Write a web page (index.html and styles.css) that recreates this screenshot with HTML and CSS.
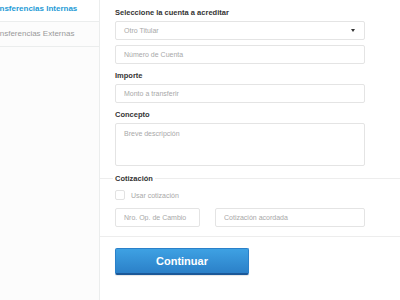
FILE: index.html
```html
<!DOCTYPE html>
<html lang="es">
<head>
    <meta charset="UTF-8">
    <title>Transferencias</title>
    <link rel="stylesheet" href="styles.css">
</head>
<body>
    <div class="layout">
        <nav class="sidebar">
            <a class="side-item active" href="#">Transferencias Internas</a>
            <a class="side-item" href="#">Transferencias Externas</a>
        </nav>

        <main class="main">
            <div class="section">
                <div class="label">Seleccione la cuenta a acreditar</div>
                <div class="select">
                    <span>Otro Titular</span>
                    <span class="caret"></span>
                </div>
                <input class="field gap-small" type="text" placeholder="Número de Cuenta">

                <div class="label spaced">Importe</div>
                <input class="field" type="text" placeholder="Monto a transferir">

                <div class="label spaced">Concepto</div>
                <textarea class="field area" placeholder="Breve descripción"></textarea>
            </div>

            <fieldset class="quote">
                <legend>Cotización</legend>
                <label class="check-row">
                    <span class="checkbox"></span>
                    <span>Usar cotización</span>
                </label>
                <div class="quote-row">
                    <input class="field op" type="text" placeholder="Nro. Op. de Cambio">
                    <input class="field rate" type="text" placeholder="Cotización acordada">
                </div>
            </fieldset>

            <div class="actions">
                <button class="btn-primary">Continuar</button>
            </div>
        </main>
    </div>
</body>
</html>
```

FILE: styles.css
```css
body {
    margin: 0;
    font-family: 'Liberation Sans', Arial, sans-serif;
    background-color: #ffffff;
    color: #333333;
}
.layout {
    display: flex;
    min-height: 300px;
}
.sidebar {
    width: 99px;
    flex-shrink: 0;
    border-right: 1px solid #ebeded;
    background-color: #fcfcfc;
    display: flex;
    flex-direction: column;
    overflow: hidden;
}
.side-item {
    display: block;
    height: 24px;
    line-height: 24px;
    font-size: 8px;
    color: #9a9a9a;
    text-decoration: none;
    white-space: nowrap;
    text-indent: -12px;
    border-bottom: 1px solid #ebeded;
}
.side-item.active {
    margin-top: -3px;
    color: #1f9bd6;
    font-weight: bold;
    text-indent: -12.5px;
    background-color: #ffffff;
    margin-right: -1px;
}
.main {
    flex: 1;
    display: flex;
    flex-direction: column;
}
.section {
    padding: 7px 15px 0;
    display: flex;
    flex-direction: column;
    width: 250px;
}
.label {
    height: 11px;
    line-height: 11px;
    font-size: 7.5px;
    font-weight: bold;
    color: #333333;
    margin-bottom: 3px;
}
.label.spaced {
    margin-top: 6px;
}
.select,
.field {
    box-sizing: border-box;
    height: 19px;
    border: 1px solid #e4e4e4;
    border-radius: 2px;
    background-color: #ffffff;
    font-family: 'Liberation Sans', Arial, sans-serif;
    font-size: 7px;
    color: #333333;
    padding: 0 8px;
    margin: 0;
    outline: none;
}
.select {
    display: flex;
    align-items: center;
    justify-content: space-between;
    color: #a8a8a8;
    padding-right: 9px;
}
.caret {
    width: 0;
    height: 0;
    border-left: 2.5px solid transparent;
    border-right: 2.5px solid transparent;
    border-top: 3.5px solid #333333;
}
.field::placeholder {
    color: #a8a8a8;
}
.gap-small {
    margin-top: 5px;
}
.area {
    height: 43px;
    padding-top: 6px;
    resize: none;
    display: block;
}
.quote {
    margin: 7px 0 0;
    padding: 0 15px 9px;
    border: none;
    border-top: 1px solid #ededed;
    border-bottom: 1px solid #ededed;
    min-width: 0;
}
.quote legend {
    padding: 0 2px;
    margin-left: -2px;
    height: 11px;
    line-height: 11px;
    font-size: 7.5px;
    font-weight: bold;
    color: #333333;
}
.check-row {
    display: flex;
    align-items: center;
    gap: 6px;
    margin-top: 6px;
    font-size: 7px;
    color: #a8a8a8;
    height: 10px;
}
.checkbox {
    box-sizing: border-box;
    width: 10px;
    height: 10px;
    border: 1px solid #e2e2e2;
    border-radius: 2px;
    background-color: #ffffff;
}
.quote-row {
    display: flex;
    gap: 15px;
    margin-top: 8px;
}
.op {
    width: 85px;
}
.rate {
    width: 150px;
}
.actions {
    padding: 11px 15px;
}
.btn-primary {
    box-sizing: border-box;
    width: 134px;
    height: 27px;
    border: 1px solid #2a80c9;
    border-bottom: 2px solid #1b5898;
    border-radius: 2px;
    background: linear-gradient(to bottom, #3ea1e3, #2b80c8);
    color: #ffffff;
    font-family: 'Liberation Sans', Arial, sans-serif;
    font-size: 11px;
    font-weight: bold;
    cursor: pointer;
    box-shadow: 0 1px 1px rgba(0, 0, 0, 0.1);
}
```
